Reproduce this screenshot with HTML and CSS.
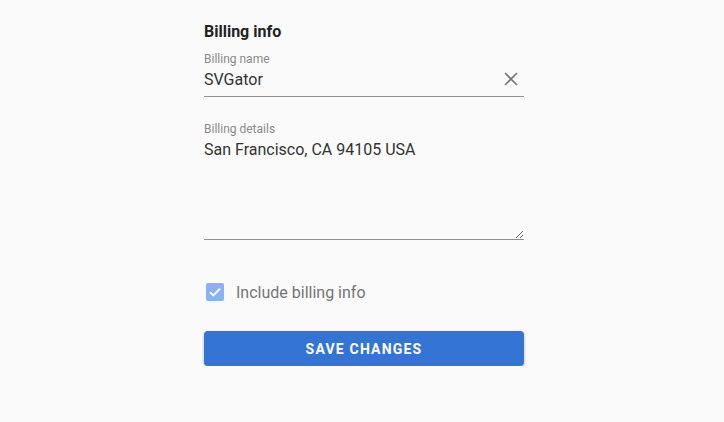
FILE: index.html
```html
<!DOCTYPE html>
<html>
<head>
<meta charset="utf-8">
<link rel="stylesheet" href="styles.css">
</head>
<body>
<div class="form">
  <div class="title">Billing info</div>
  <div class="field">
    <label class="label">Billing name</label>
    <div class="input-wrap">
      <input class="input" type="text" value="SVGator">
      <svg class="clear" width="14" height="14" viewBox="0 0 14 14"><path d="M1 1 L13 13 M13 1 L1 13" stroke="#757575" stroke-width="1.6" fill="none"/></svg>
    </div>
  </div>
  <div class="field field-details">
    <label class="label">Billing details</label>
    <textarea class="textarea">San Francisco, CA 94105 USA</textarea>
  </div>
  <div class="check-row">
    <span class="checkbox"><svg width="18" height="18" viewBox="0 0 18 18"><path d="M4 9.2 L7.4 12.4 L14 5.6" stroke="#fff" stroke-width="2" fill="none"/></svg></span>
    <span class="check-label">Include billing info</span>
  </div>
  <button class="btn">SAVE CHANGES</button>
</div>
</body>
</html>
```
FILE: styles.css
```css
html, body {
  margin: 0;
  padding: 0;
  background: #fafafa;
  font-family: Roboto, "Liberation Sans", sans-serif;
}
.form {
  width: 320px;
  margin-left: 204px;
  padding-top: 22px;
  display: flex;
  flex-direction: column;
}
.title {
  font-size: 16px;
  line-height: 20px;
  font-weight: 700;
  color: #222;
}
.field {
  display: flex;
  flex-direction: column;
  margin-top: 9px;
}
.field-details {
  margin-top: 24px;
}
.label {
  font-size: 12px;
  line-height: 16px;
  color: #8a8a8a;
}
.input-wrap {
  position: relative;
  margin-top: 2px;
}
.input {
  display: block;
  width: 100%;
  box-sizing: border-box;
  border: none;
  border-bottom: 1px solid #8f8f8f;
  background: transparent;
  font-family: Roboto, "Liberation Sans", sans-serif;
  font-size: 16px;
  line-height: 20px;
  height: 28px;
  padding: 0 0 7px 0;
  color: #333;
  outline: none;
}
.clear {
  position: absolute;
  right: 6px;
  top: 3px;
}
.textarea {
  display: block;
  width: 100%;
  box-sizing: border-box;
  height: 100px;
  margin-top: 3px;
  border: none;
  border-bottom: 1px solid #8f8f8f;
  background: transparent;
  font-family: Roboto, "Liberation Sans", sans-serif;
  font-size: 16px;
  line-height: 20px;
  padding: 0;
  color: #333;
  outline: none;
  resize: vertical;
}
.check-row {
  display: flex;
  align-items: center;
  margin-top: 43px;
  padding-left: 2px;
  height: 18px;
}
.checkbox {
  width: 18px;
  height: 18px;
  border-radius: 2px;
  background: #8ab1f5;
  display: flex;
}
.check-label {
  margin-left: 12px;
  font-size: 16px;
  color: #757575;
}
.btn {
  margin-top: 30px;
  height: 35px;
  width: 320px;
  border: none;
  border-radius: 4px;
  background: #3474d4;
  color: #fff;
  font-family: Roboto, "Liberation Sans", sans-serif;
  font-size: 14px;
  font-weight: 700;
  letter-spacing: 1.2px;
  box-shadow: 0 1px 3px rgba(0,0,0,0.3);
  padding: 0;
}
```
